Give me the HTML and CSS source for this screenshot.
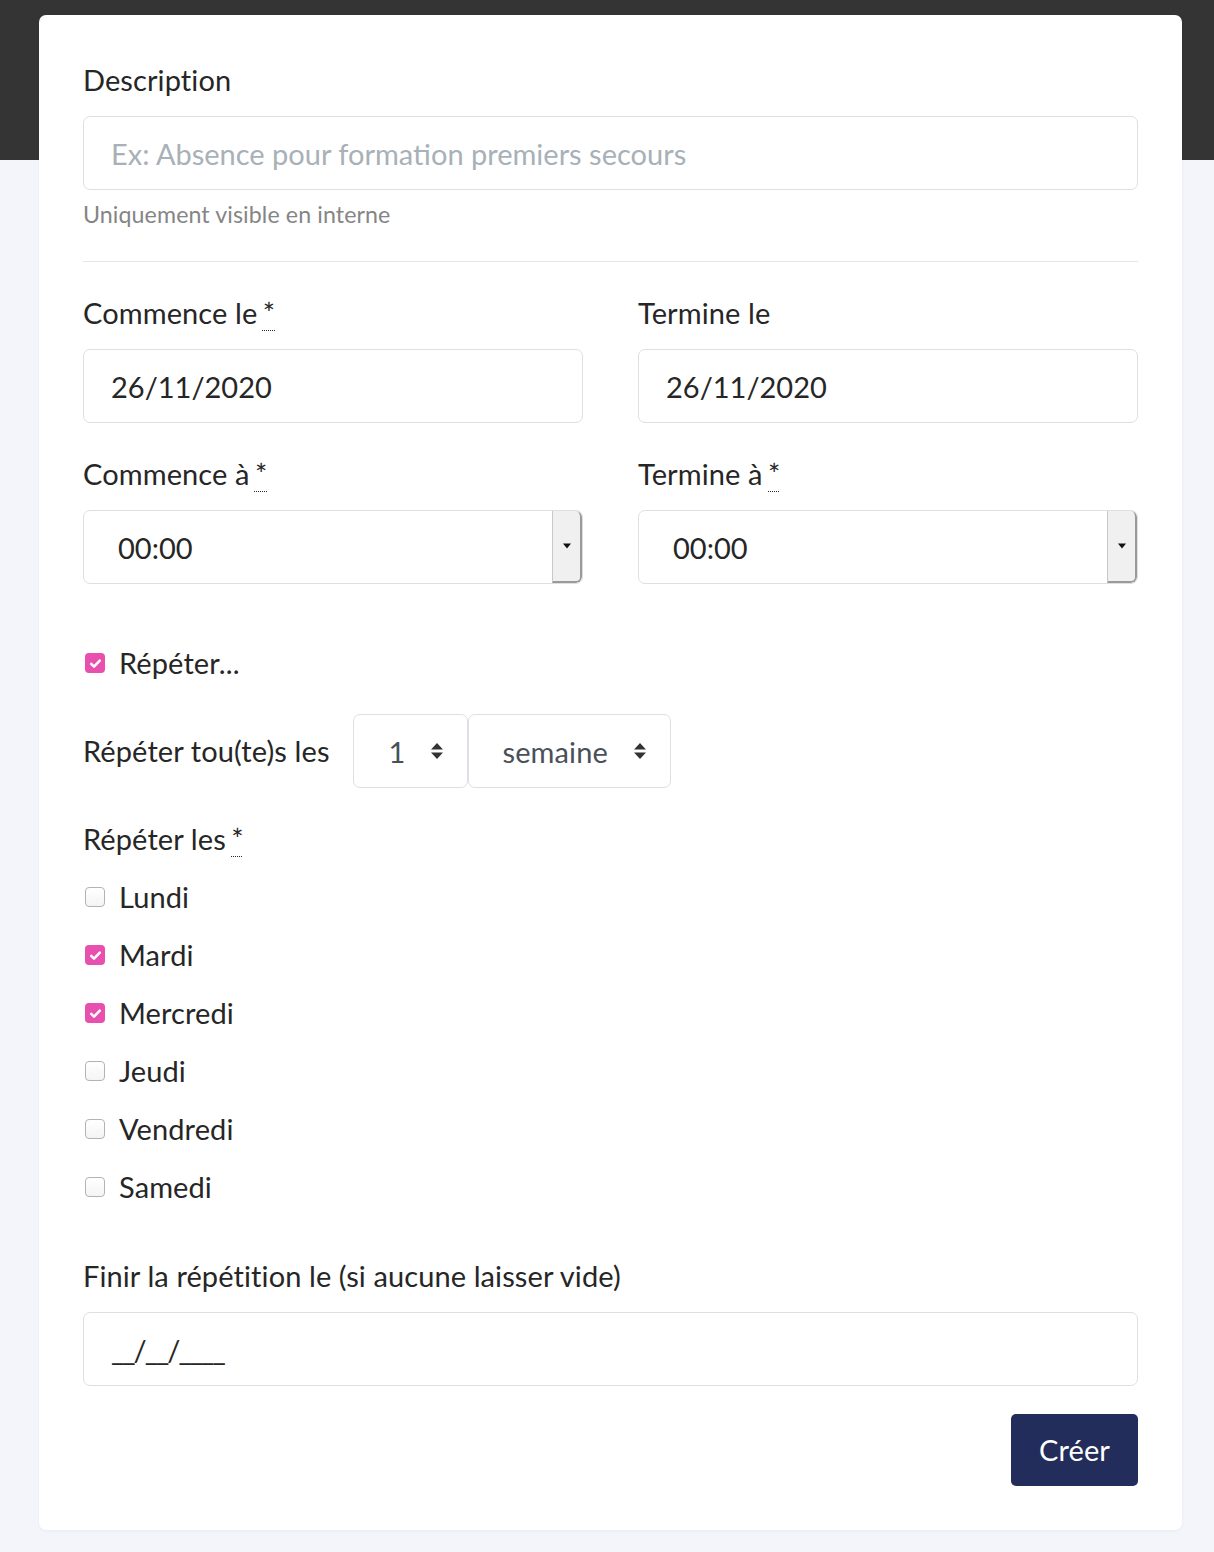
FILE: index.html
```html
<!DOCTYPE html>
<html lang="fr">
<head>
<meta charset="utf-8">
<title>Absence</title>
<link rel="stylesheet" href="styles.css">
</head>
<body>
<div class="page">
  <div class="card">
    <div class="group">
      <div class="label">Description</div>
      <div class="field"><span class="placeholder">Ex: Absence pour formation premiers secours</span></div>
      <div class="help">Uniquement visible en interne</div>
    </div>
    <div class="divider"></div>

    <div class="row">
      <div class="group">
        <div class="label">Commence le <abbr class="req" title="requis">*</abbr></div>
        <div class="field">26/11/2020</div>
      </div>
      <div class="group">
        <div class="label">Termine le</div>
        <div class="field">26/11/2020</div>
      </div>
    </div>

    <div class="row">
      <div class="group">
        <div class="label">Commence à <abbr class="req" title="requis">*</abbr></div>
        <div class="field time"><span class="time-value">00:00</span><span class="spinner"><svg width="10" height="6" viewBox="0 0 10 6"><path d="M1 0.5h8L5 5.5z" fill="#111"/></svg></span></div>
      </div>
      <div class="group">
        <div class="label">Termine à <abbr class="req" title="requis">*</abbr></div>
        <div class="field time"><span class="time-value">00:00</span><span class="spinner"><svg width="10" height="6" viewBox="0 0 10 6"><path d="M1 0.5h8L5 5.5z" fill="#111"/></svg></span></div>
      </div>
    </div>

    <div class="group repeat-toggle">
      <div class="check"><span class="box checked"><svg width="15" height="15" viewBox="0 0 14 14"><path d="M3 7.3l2.6 2.6L11 4.3" fill="none" stroke="#fff" stroke-width="2.4" stroke-linecap="round" stroke-linejoin="round"/></svg></span><span>Répéter...</span></div>
    </div>

    <div class="group every">
      <span class="every-label">Répéter tou(te)s les</span>
      <div class="select num"><span>1</span><svg class="updown" width="14" height="20" viewBox="0 0 14 20"><path d="M7 2L13 8.5H1z M7 18L1 11.5h12z" fill="#333"/></svg></div>
      <div class="select unit"><span>semaine</span><svg class="updown" width="14" height="20" viewBox="0 0 14 20"><path d="M7 2L13 8.5H1z M7 18L1 11.5h12z" fill="#333"/></svg></div>
    </div>

    <div class="group days">
      <div class="label">Répéter les <abbr class="req" title="requis">*</abbr></div>
      <div class="check"><span class="box"></span><span>Lundi</span></div>
      <div class="check"><span class="box checked"><svg width="15" height="15" viewBox="0 0 14 14"><path d="M3 7.3l2.6 2.6L11 4.3" fill="none" stroke="#fff" stroke-width="2.4" stroke-linecap="round" stroke-linejoin="round"/></svg></span><span>Mardi</span></div>
      <div class="check"><span class="box checked"><svg width="15" height="15" viewBox="0 0 14 14"><path d="M3 7.3l2.6 2.6L11 4.3" fill="none" stroke="#fff" stroke-width="2.4" stroke-linecap="round" stroke-linejoin="round"/></svg></span><span>Mercredi</span></div>
      <div class="check"><span class="box"></span><span>Jeudi</span></div>
      <div class="check"><span class="box"></span><span>Vendredi</span></div>
      <div class="check"><span class="box"></span><span>Samedi</span></div>
    </div>

    <div class="group">
      <div class="label">Finir la répétition le (si aucune laisser vide)</div>
      <div class="field"><span class="mask">__/__/____</span></div>
    </div>

    <div class="actions">
      <button class="btn" type="button">Créer</button>
    </div>
  </div>
</div>
</body>
</html>
```

FILE: styles.css
```css
html, body {
  margin: 0;
  padding: 0;
}

body {
  font-family: Lato, "Open Sans", "Liberation Sans", sans-serif;
  color: #262626;
  background: linear-gradient(to bottom, #343434 0, #343434 160px, #f4f5fa 160px, #f4f5fa 100%);
  min-height: 1552px;
  letter-spacing: 0.1px;
}

.page {
  padding: 15px 32px 22px 39px;
}

.card {
  background: #fff;
  border-radius: 7px;
  padding: 44px;
  box-shadow: 0 1px 3px rgba(30, 40, 80, 0.05);
}

.group {
  margin-bottom: 30px;
}

.label {
  font-size: 29px;
  line-height: 42px;
  margin-bottom: 15px;
  color: #262626;
}

.req {
  text-decoration: underline dotted;
  text-decoration-thickness: 1px;
  text-underline-offset: 6px;
  margin-left: -2px;
  cursor: help;
}

.field {
  box-sizing: border-box;
  height: 74px;
  border: 1px solid #dcdfe5;
  border-radius: 7px;
  padding: 0 27px;
  display: flex;
  align-items: center;
  font-size: 29px;
  letter-spacing: 0;
  color: #262626;
  background: #fff;
}

.placeholder {
  color: #a8b0b8;
}

.mask {
  letter-spacing: -2px;
}

.help {
  margin-top: 7px;
  font-size: 23.2px;
  line-height: 34px;
  color: #858585;
}

.divider {
  height: 1px;
  background: #e6e6e6;
  margin: 0 0 30px 0;
}

.row {
  display: grid;
  grid-template-columns: 1fr 1fr;
  column-gap: 55px;
}

.field.time {
  padding: 0 0 0 34px;
  overflow: hidden;
  align-items: stretch;
}

.time-value {
  flex: 1;
  display: flex;
  align-items: center;
}

.spinner {
  width: 27px;
  display: flex;
  align-items: center;
  justify-content: center;
  background: #f0f0f0;
  border-left: 1px solid #c8c8c8;
  border-right: 2px solid #9a9a9a;
  border-bottom: 2px solid #9a9a9a;
  border-bottom-right-radius: 6px;
  border-top-right-radius: 6px;
}

.repeat-toggle {
  margin-top: 28px;
}

.check {
  display: flex;
  align-items: center;
  font-size: 29px;
  line-height: 42px;
  gap: 14px;
}

.days .check {
  margin-bottom: 16px;
}

.days .label {
  margin-bottom: 16px;
}

.days {
  margin-bottom: 47px;
}

.box {
  box-sizing: border-box;
  width: 20px;
  height: 20px;
  margin-left: 2px;
  border: 1px solid #b3b3b3;
  border-radius: 4px;
  background: linear-gradient(#ffffff, #f4f4f4);
  display: flex;
  align-items: center;
  justify-content: center;
  flex: none;
}

.box.checked {
  border: none;
  background: #e94fae;
}

.every {
  display: flex;
  align-items: center;
}

.every-label {
  font-size: 29px;
  line-height: 42px;
  margin-right: 23px;
}

.select {
  box-sizing: border-box;
  height: 74px;
  border: 1px solid #dcdfe5;
  border-radius: 7px;
  display: flex;
  align-items: center;
  justify-content: space-between;
  font-size: 29px;
  color: #495057;
  background: #fff;
}

.select.num {
  width: 115px;
  padding: 0 23px 0 35px;
}

.select.unit {
  width: 203px;
  padding: 0 23px 0 34px;
}

.actions {
  display: flex;
  justify-content: flex-end;
  margin-top: -2px;
}

.btn {
  font-family: Lato, "Open Sans", "Liberation Sans", sans-serif;
  font-size: 29px;
  line-height: 42px;
  letter-spacing: 0.1px;
  padding: 15px 28px;
  border: none;
  border-radius: 5px;
  background: #222d5b;
  color: #fff;
  cursor: pointer;
}
```
